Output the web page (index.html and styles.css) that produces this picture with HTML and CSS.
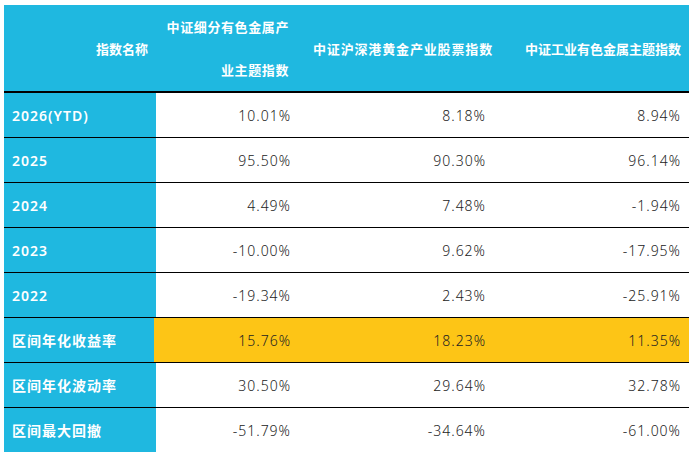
FILE: index.html
```html
<!DOCTYPE html>
<html>
  <head>
    <meta charset="utf-8">
    <title>指数表现对比</title>
    <link rel="stylesheet" href="styles.css">
  </head>
  <body>
    <table class="perf">
      <colgroup>
        <col class="c-name">
        <col class="c-a">
        <col class="c-b">
        <col class="c-c">
      </colgroup>
      <thead>
        <tr>
          <th>指数名称</th>
          <th class="wrap">中证细分有色金属产<br>业主题指数</th>
          <th class="spaced">中证沪深港黄金产业股票指数</th>
          <th>中证工业有色金属主题指数</th>
        </tr>
      </thead>
      <tbody>
        <tr><td class="label">2026(YTD)</td><td>10.01%</td><td>8.18%</td><td>8.94%</td></tr>
        <tr><td class="label">2025</td><td>95.50%</td><td>90.30%</td><td>96.14%</td></tr>
        <tr><td class="label">2024</td><td>4.49%</td><td>7.48%</td><td>-1.94%</td></tr>
        <tr><td class="label">2023</td><td>-10.00%</td><td>9.62%</td><td>-17.95%</td></tr>
        <tr><td class="label">2022</td><td>-19.34%</td><td>2.43%</td><td>-25.91%</td></tr>
        <tr class="hl"><td class="label">区间年化收益率</td><td class="first">15.76%</td><td>18.23%</td><td>11.35%</td></tr>
        <tr><td class="label">区间年化波动率</td><td>30.50%</td><td>29.64%</td><td>32.78%</td></tr>
        <tr class="last"><td class="label">区间最大回撤</td><td>-51.79%</td><td>-34.64%</td><td>-61.00%</td></tr>
      </tbody>
    </table>
  </body>
</html>
```

FILE: styles.css
```css
body {
  margin: 0;
  background: #fff;
  font-family: "Noto Sans", "Noto Sans CJK SC", sans-serif;
}
.perf {
  margin: 5px 0 0 4px;
  width: 685px;
  border-collapse: collapse;
  table-layout: fixed;
}
.c-name { width: 152px; }
.c-a { width: 143px; }
.c-b { width: 195px; }
.c-c { width: 195px; }

.perf th {
  height: 86px;
  padding: 0 8px 0 0;
  background: #1fb8e0;
  color: #fff;
  font-family: "Noto Sans CJK SC", sans-serif;
  font-size: 13px;
  font-weight: bold;
  text-align: right;
  vertical-align: middle;
  border-bottom: 2px solid #000;
  white-space: nowrap;
}
.perf th.wrap {
  line-height: 43px;
  letter-spacing: 0.6px;
  padding-right: 10px;
}
.perf th.spaced {
  letter-spacing: 0.85px;
  padding-right: 1px;
}

.perf td {
  height: 44px;
  padding: 0 8px 0 0;
  border-top: 1px solid #000;
  text-align: right;
  font-size: 14px;
  font-weight: 300;
  letter-spacing: 1px;
  color: #222;
}
.perf tbody tr:first-child td { border-top: none; }
.perf td.label {
  padding: 0 0 0 8px;
  text-align: left;
  background: #1fb8e0;
  color: #fff;
  font-weight: 600;
  font-family: "Noto Sans", "Noto Sans CJK SC", sans-serif;
}
.perf tr.hl td {
  background: #fdc516;
}
.perf tr.hl td.label {
  background: #1fb8e0;
}
.perf tr.hl td.first {
  box-shadow: -2px 0 0 #fdc516;
}
```
